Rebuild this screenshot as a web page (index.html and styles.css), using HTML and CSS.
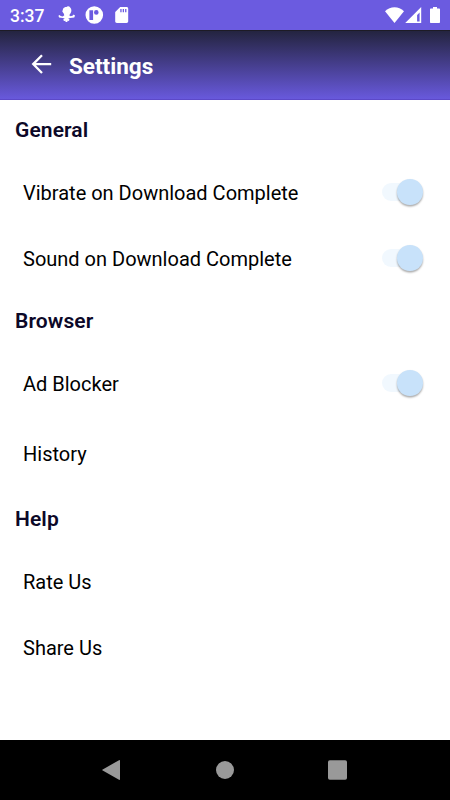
FILE: index.html
```html
<!DOCTYPE html>
<html lang="en">
<head>
<meta charset="utf-8">
<title>Settings</title>
<link rel="stylesheet" href="styles.css">
</head>
<body>
<div class="screen">
  <div class="status">
    <span class="time">3:37</span>
    <svg class="left-icons" width="74" height="20" viewBox="57 5 74 20" fill="#fff">
      <path d="M62.300 11.500 63.100 8.800C63.600 7.300 65 6.900 66.500 6.900c.9-1 2.900-.8 3.700.5 1.500 1.300 1.600 4.200.2 6l-1.200 1.800 1.500 1 2.200-.6.600-1 1.500.8-.7 2-4.100.7-2 .4 1.500 1.300-1.100 1.300-1.200-.3v1.300h-1.900v-1.300l-1.400.3-1-1.300 1.600-1.300-1.900-.4-3.700-.6-.7-1.700 1.300-.9.900 1 2.200.5 1.500-1.200-.6-1.700z"/>
      <path fill-rule="evenodd" d="M94.300 6.200a8.800 8.800 0 1 1 0 17.600 8.800 8.800 0 0 1 0-17.600zm-4.900 4v9.800h3.700V10.200zm6.900-.1a2.300 2.300 0 1 0 0 4.600 2.300 2.300 0 0 0 0-4.600z"/>
      <path fill-rule="evenodd" d="M120.200 7h6.300c1 0 1.700.7 1.700 1.700v12.500c0 1-.7 1.700-1.700 1.700h-9.600c-1 0-1.700-.7-1.700-1.700V12zm.1 2v3.300h1.300V9zm2.400 0v3.300h1.300V9zm2.400 0v3.300h1.300V9z"/>
    </svg>
    <svg class="right-icons" width="58" height="20" viewBox="384 5 58 20" fill="#fff">
      <path d="M385 11.200c5.400-5.300 13.600-5.300 19 0L394.500 23z"/>
      <path fill-rule="evenodd" d="M421.200 7v16h-16zm-1.600 5.600-2.500 2.500v6.300h2.500z"/>
      <path d="M433 7h4v1.500h2c.6 0 1 .4 1 1V22c0 .6-.4 1-1 1h-8c-.6 0-1-.4-1-1V9.500c0-.6.4-1 1-1h2z"/>
    </svg>
  </div>
  <header class="toolbar">
    <svg class="back" width="22" height="22" viewBox="30 53 22 22" fill="none" stroke="#fff" stroke-width="2.300"><path d="M51.200 64.100H33M42 55.300l-8.800 8.800 8.800 8.900"/></svg>
    <h1>Settings</h1>
  </header>
  <main>
    <h2>General</h2>
    <div class="row"><span>Vibrate on Download Complete</span><i class="switch"></i></div>
    <div class="row"><span>Sound on Download Complete</span><i class="switch"></i></div>
    <h2 class="browser">Browser</h2>
    <div class="row"><span>Ad Blocker</span><i class="switch"></i></div>
    <div class="row history"><span>History</span></div>
    <h2 class="help">Help</h2>
    <div class="row"><span>Rate Us</span></div>
    <div class="row"><span>Share Us</span></div>
  </main>
  <nav>
    <svg width="240" height="22" viewBox="100 759 240 22" fill="#999">
      <path d="M119 760.200q1-.5 1 .6v18.400q0 1.100-1 .6l-16.300-9.200q-1.100-.6 0-1.200z"/>
      <circle cx="225" cy="770" r="9"/>
      <rect x="328" y="760.300" width="19" height="19.400" rx="1.800"/>
    </svg>
  </nav>
</div>
</body>
</html>
```
FILE: styles.css
```css
* { box-sizing: border-box; }
body { margin: 0; font-family: Roboto, sans-serif; background: #fff; }
.screen { width: 450px; height: 800px; display: flex; flex-direction: column; overflow: hidden; }
.status { height: 30px; flex: none; background: #6b5be0; display: flex; align-items: center; padding: 0 8px 0 10px; color: #fff; }
.time { width: 47px; font-size: 17.5px; line-height: 30px; font-weight: 500; padding-top: 2px; }
.left-icons { flex: none; }
.right-icons { margin-left: auto; }
.toolbar { height: 70px; flex: none; display: flex; align-items: center; padding-left: 30px; background: linear-gradient(#242440, #6859dc); border-top: 1px solid #1d1b25; border-bottom: 1px solid #5c49c8; color: #fff; }
.back { margin-top: -2px; }
h1 { margin: 2px 0 0 17px; font-size: 22.5px; line-height: 30px; font-weight: 700; }
main { flex: 1; padding: 15px 27px 0 15px; }
h2 { margin: 0; font-size: 21px; line-height: 30px; font-weight: 600; letter-spacing: .1px; color: #0c0828; }
.row { height: 66px; margin-left: 8px; display: flex; align-items: center; justify-content: space-between; font-size: 20px; font-weight: 380; letter-spacing: 0; color: #000; }
h2 + .row { margin-top: 14px; }
.browser { margin-top: 15px; }
.history { margin-top: 4px; }
.help { margin-top: 18px; }
.switch { width: 40.500px; margin-right: .5px; height: 18px; display: flex; align-items: center; justify-content: flex-end; background: linear-gradient(90deg, #f1f8fe 30px, transparent 30px); border-radius: 9px; }
.row span { padding-top: 1px; }
.switch::after { content: ""; flex: none; width: 25.500px; height: 25.500px; border-radius: 50%; background: #c8e2fa; box-shadow: 0 1.500px 2px #0005; }
nav { height: 60px; flex: none; background: #000; display: flex; align-items: center; padding-left: 100px; }
nav svg { overflow: visible; }
```
